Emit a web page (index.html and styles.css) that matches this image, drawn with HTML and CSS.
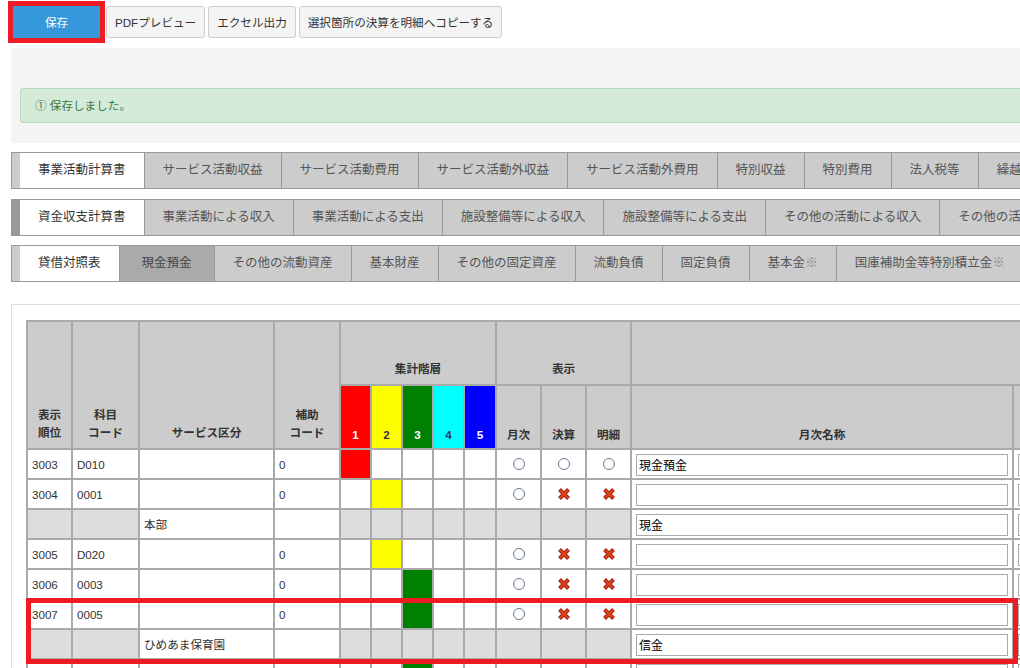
FILE: index.html
```html
<!DOCTYPE html>
<html lang="ja">
<head>
    <meta charset="UTF-8">
    <meta name="viewport" content="width=device-width, initial-scale=1.0">
    <title>科目設定</title>
    <link rel="stylesheet" href="styles.css">
</head>
<body>
    <div class="page">
        <div class="toolbar">
            <button class="btn btn-save">保存</button>
            <button class="btn">PDFプレビュー</button>
            <button class="btn">エクセル出力</button>
            <button class="btn">選択箇所の決算を明細へコピーする</button>
        </div>

        <div class="message-box">
            <div class="alert">① 保存しました。</div>
        </div>

        <div class="tabs">
            <span class="tab active">事業活動計算書</span>
            <span class="tab">サービス活動収益</span>
            <span class="tab">サービス活動費用</span>
            <span class="tab">サービス活動外収益</span>
            <span class="tab">サービス活動外費用</span>
            <span class="tab">特別収益</span>
            <span class="tab">特別費用</span>
            <span class="tab">法人税等</span>
            <span class="tab">繰越活動増減差額</span>
        </div>
        <div class="tabs tabs-dark">
            <span class="tab active">資金収支計算書</span>
            <span class="tab">事業活動による収入</span>
            <span class="tab">事業活動による支出</span>
            <span class="tab">施設整備等による収入</span>
            <span class="tab">施設整備等による支出</span>
            <span class="tab">その他の活動による収入</span>
            <span class="tab">その他の活動による支出</span>
        </div>
        <div class="tabs">
            <span class="tab active">貸借対照表</span>
            <span class="tab current">現金預金</span>
            <span class="tab">その他の流動資産</span>
            <span class="tab">基本財産</span>
            <span class="tab">その他の固定資産</span>
            <span class="tab">流動負債</span>
            <span class="tab">固定負債</span>
            <span class="tab">基本金<span class="note">※</span></span>
            <span class="tab">国庫補助金等特別積立金<span class="note">※</span></span>
            <span class="tab">その他の純資産</span>
        </div>

        <div class="table-panel">
            <table class="grid">
                <colgroup>
                    <col class="c-order">
                    <col class="c-code">
                    <col class="c-svc">
                    <col class="c-sub">
                    <col class="c-lv"><col class="c-lv"><col class="c-lv"><col class="c-lv"><col class="c-lv5">
                    <col class="c-mark"><col class="c-mark"><col class="c-mark">
                    <col class="c-name">
                    <col class="c-name2">
                </colgroup>
                <thead>
                    <tr class="head-top">
                        <th rowspan="2">表示<br>順位</th>
                        <th rowspan="2">科目<br>コード</th>
                        <th rowspan="2">サービス区分</th>
                        <th rowspan="2">補助<br>コード</th>
                        <th colspan="5">集計階層</th>
                        <th colspan="3">表示</th>
                        <th colspan="2"></th>
                    </tr>
                    <tr class="head-bottom">
                        <th class="lv1">1</th>
                        <th class="lv2">2</th>
                        <th class="lv3">3</th>
                        <th class="lv4">4</th>
                        <th class="lv5">5</th>
                        <th>月次</th>
                        <th>決算</th>
                        <th>明細</th>
                        <th>月次名称</th>
                        <th>決算名称</th>
                    </tr>
                </thead>
                <tbody>
                    <tr>
                        <td>3003</td><td>D010</td><td></td><td>0</td>
                        <td class="lv1"></td><td></td><td></td><td></td><td></td>
                        <td class="mark"><span class="ok"></span></td>
                        <td class="mark"><span class="ok"></span></td>
                        <td class="mark"><span class="ok"></span></td>
                        <td class="name"><input type="text" value="現金預金"></td>
                        <td class="name"><input type="text"></td>
                    </tr>
                    <tr>
                        <td>3004</td><td>0001</td><td></td><td>0</td>
                        <td></td><td class="lv2"></td><td></td><td></td><td></td>
                        <td class="mark"><span class="ok"></span></td>
                        <td class="mark"><svg class="ng" viewBox="0 0 12 12"><path d="M1.5 1.5L10.5 10.5M10.5 1.5L1.5 10.5" stroke="#9c2410" stroke-width="4"/><path d="M2 2L10 10M10 2L2 10" stroke="#e0401c" stroke-width="2.2"/></svg></td>
                        <td class="mark"><svg class="ng" viewBox="0 0 12 12"><path d="M1.5 1.5L10.5 10.5M10.5 1.5L1.5 10.5" stroke="#9c2410" stroke-width="4"/><path d="M2 2L10 10M10 2L2 10" stroke="#e0401c" stroke-width="2.2"/></svg></td>
                        <td class="name"><input type="text"></td>
                        <td class="name"><input type="text"></td>
                    </tr>
                    <tr class="sub">
                        <td></td><td></td><td class="svc">本部</td><td class="svc"></td>
                        <td></td><td></td><td></td><td></td><td></td>
                        <td></td><td></td><td></td>
                        <td class="name"><input type="text" value="現金"></td>
                        <td class="name"><input type="text"></td>
                    </tr>
                    <tr>
                        <td>3005</td><td>D020</td><td></td><td>0</td>
                        <td></td><td class="lv2"></td><td></td><td></td><td></td>
                        <td class="mark"><span class="ok"></span></td>
                        <td class="mark"><svg class="ng" viewBox="0 0 12 12"><path d="M1.5 1.5L10.5 10.5M10.5 1.5L1.5 10.5" stroke="#9c2410" stroke-width="4"/><path d="M2 2L10 10M10 2L2 10" stroke="#e0401c" stroke-width="2.2"/></svg></td>
                        <td class="mark"><svg class="ng" viewBox="0 0 12 12"><path d="M1.5 1.5L10.5 10.5M10.5 1.5L1.5 10.5" stroke="#9c2410" stroke-width="4"/><path d="M2 2L10 10M10 2L2 10" stroke="#e0401c" stroke-width="2.2"/></svg></td>
                        <td class="name"><input type="text"></td>
                        <td class="name"><input type="text"></td>
                    </tr>
                    <tr>
                        <td>3006</td><td>0003</td><td></td><td>0</td>
                        <td></td><td></td><td class="lv3"></td><td></td><td></td>
                        <td class="mark"><span class="ok"></span></td>
                        <td class="mark"><svg class="ng" viewBox="0 0 12 12"><path d="M1.5 1.5L10.5 10.5M10.5 1.5L1.5 10.5" stroke="#9c2410" stroke-width="4"/><path d="M2 2L10 10M10 2L2 10" stroke="#e0401c" stroke-width="2.2"/></svg></td>
                        <td class="mark"><svg class="ng" viewBox="0 0 12 12"><path d="M1.5 1.5L10.5 10.5M10.5 1.5L1.5 10.5" stroke="#9c2410" stroke-width="4"/><path d="M2 2L10 10M10 2L2 10" stroke="#e0401c" stroke-width="2.2"/></svg></td>
                        <td class="name"><input type="text"></td>
                        <td class="name"><input type="text"></td>
                    </tr>
                    <tr>
                        <td>3007</td><td>0005</td><td></td><td>0</td>
                        <td></td><td></td><td class="lv3"></td><td></td><td></td>
                        <td class="mark"><span class="ok"></span></td>
                        <td class="mark"><svg class="ng" viewBox="0 0 12 12"><path d="M1.5 1.5L10.5 10.5M10.5 1.5L1.5 10.5" stroke="#9c2410" stroke-width="4"/><path d="M2 2L10 10M10 2L2 10" stroke="#e0401c" stroke-width="2.2"/></svg></td>
                        <td class="mark"><svg class="ng" viewBox="0 0 12 12"><path d="M1.5 1.5L10.5 10.5M10.5 1.5L1.5 10.5" stroke="#9c2410" stroke-width="4"/><path d="M2 2L10 10M10 2L2 10" stroke="#e0401c" stroke-width="2.2"/></svg></td>
                        <td class="name"><input type="text"></td>
                        <td class="name"><input type="text"></td>
                    </tr>
                    <tr class="sub">
                        <td></td><td></td><td class="svc">ひめあま保育園</td><td class="svc"></td>
                        <td></td><td></td><td></td><td></td><td></td>
                        <td></td><td></td><td></td>
                        <td class="name"><input type="text" value="信金"></td>
                        <td class="name"><input type="text"></td>
                    </tr>
                    <tr>
                        <td>3008</td><td>0006</td><td></td><td>0</td>
                        <td></td><td></td><td class="lv3"></td><td></td><td></td>
                        <td class="mark"><span class="ok"></span></td>
                        <td class="mark"><span class="ok"></span></td>
                        <td class="mark"><span class="ok"></span></td>
                        <td class="name"><input type="text"></td>
                        <td class="name"><input type="text"></td>
                    </tr>
                </tbody>
            </table>
        </div>
    </div>

    <div class="highlight"></div>
</body>
</html>
```

FILE: styles.css
```css
html, body {
    margin: 0;
    overflow: hidden;
}
body {
    font-family: "Liberation Sans", "Noto Sans CJK JP", sans-serif;
    font-size: 11.6px;
    color: #333;
    background-color: #fff;
}
.page {
    width: 1400px;
    padding-left: 11px;
}

/* toolbar */
.toolbar {
    display: flex;
    gap: 3px;
    padding: 6px 0 0 2px;
    margin-bottom: 10px;
}
.btn {
    height: 32px;
    padding: 0 8px;
    font-family: inherit;
    font-size: 11.6px;
    color: #333;
    background-color: #f4f4f4;
    border: 1px solid #ccc;
    border-radius: 3px;
}
.btn-save {
    width: 87px;
    margin-right: 3px;
    color: #fff;
    background-color: #3498db;
    border-color: #3498db;
    border-radius: 0;
    outline: 5px solid #ed1c24;
}

/* message */
.message-box {
    background-color: #f4f4f4;
    border-radius: 4px;
    padding: 40px 0 20px 9px;
    margin-bottom: 9px;
}
.alert {
    height: 35px;
    box-sizing: border-box;
    line-height: 33px;
    padding-left: 14px;
    background-color: #d4ebda;
    border: 1px solid #b3dcbf;
    border-radius: 3px 0 0 3px;
    color: #3c763d;
}

/* tab rows */
.tabs {
    display: flex;
    width: max-content;
    height: 37px;
    box-sizing: border-box;
    border: 1px solid #999;
    padding-left: 8px;
    background-color: #ccc;
    margin-bottom: 9px;
    font-size: 12.5px;
}
.tabs-dark {
    margin-top: 10px;
    background-color: #999;
}
.tab {
    padding: 0 18px;
    line-height: 35px;
    color: #555;
    background-color: #ccc;
    border-right: 1px solid #999;
    white-space: nowrap;
}
.tab.active {
    background-color: #fff;
    color: #333;
}
.tab.current {
    padding: 0 22px;
    background-color: #aaa;
    color: #444;
}
.tab .note {
    color: #888;
}

/* table */
.table-panel {
    margin-top: 22px;
    border: 1px solid #ddd;
    padding: 15px 14px 40px;
}
.grid {
    border-collapse: collapse;
    table-layout: fixed;
    width: 1369px;
}
.c-order { width: 45px; }
.c-code { width: 67px; }
.c-svc { width: 135px; }
.c-sub { width: 66px; }
.c-lv { width: 31px; }
.c-lv5 { width: 32px; }
.c-mark { width: 45px; }
.c-name { width: 382px; }
.c-name2 { width: 383px; }

.grid th,
.grid td {
    border: 2px solid #aaa;
}
.grid th {
    background-color: #ccc;
    font-weight: bold;
    text-align: center;
    vertical-align: bottom;
    line-height: 18px;
    padding: 0 0 4px;
}
.head-top th {
    height: 56px;
    padding-bottom: 6px;
}
.head-bottom th {
    height: 58px;
}
.grid td {
    height: 28px;
    padding: 0 4px;
    background-color: #fff;
    white-space: nowrap;
}
.grid th.lv1, .grid td.lv1 { background-color: #f00; color: #fff; }
.grid th.lv2, .grid td.lv2 { background-color: #ff0; color: #333; }
.grid th.lv3, .grid td.lv3 { background-color: #008000; color: #fff; }
.grid th.lv4, .grid td.lv4 { background-color: #0ff; color: #336; }
.grid th.lv5, .grid td.lv5 { background-color: #00f; color: #fff; }

.grid tr.sub td {
    background-color: #ddd;
}
.grid tr.sub td.svc,
.grid tr.sub td.name {
    background-color: #fff;
}
.mark {
    text-align: center;
    line-height: 0;
}
.ok {
    display: inline-block;
    width: 10px;
    height: 10px;
    border: 1px solid #6a7890;
    border-radius: 50%;
}
.ng {
    width: 12px;
    height: 12px;
}
.name input {
    display: block;
    width: 100%;
    height: 22px;
    box-sizing: border-box;
    border: 1px solid #aaa;
    padding: 0 2px;
    font-family: "Liberation Sans", "Noto Sans CJK JP", sans-serif;
    font-size: 12px;
    color: #000;
    margin-top: 1px;
}

/* annotation frame drawn over the selected rows */
.highlight {
    position: absolute;
    left: 26px;
    top: 598px;
    width: 992px;
    height: 66px;
    box-sizing: border-box;
    border: 5px solid #ed1c24;
}
```
